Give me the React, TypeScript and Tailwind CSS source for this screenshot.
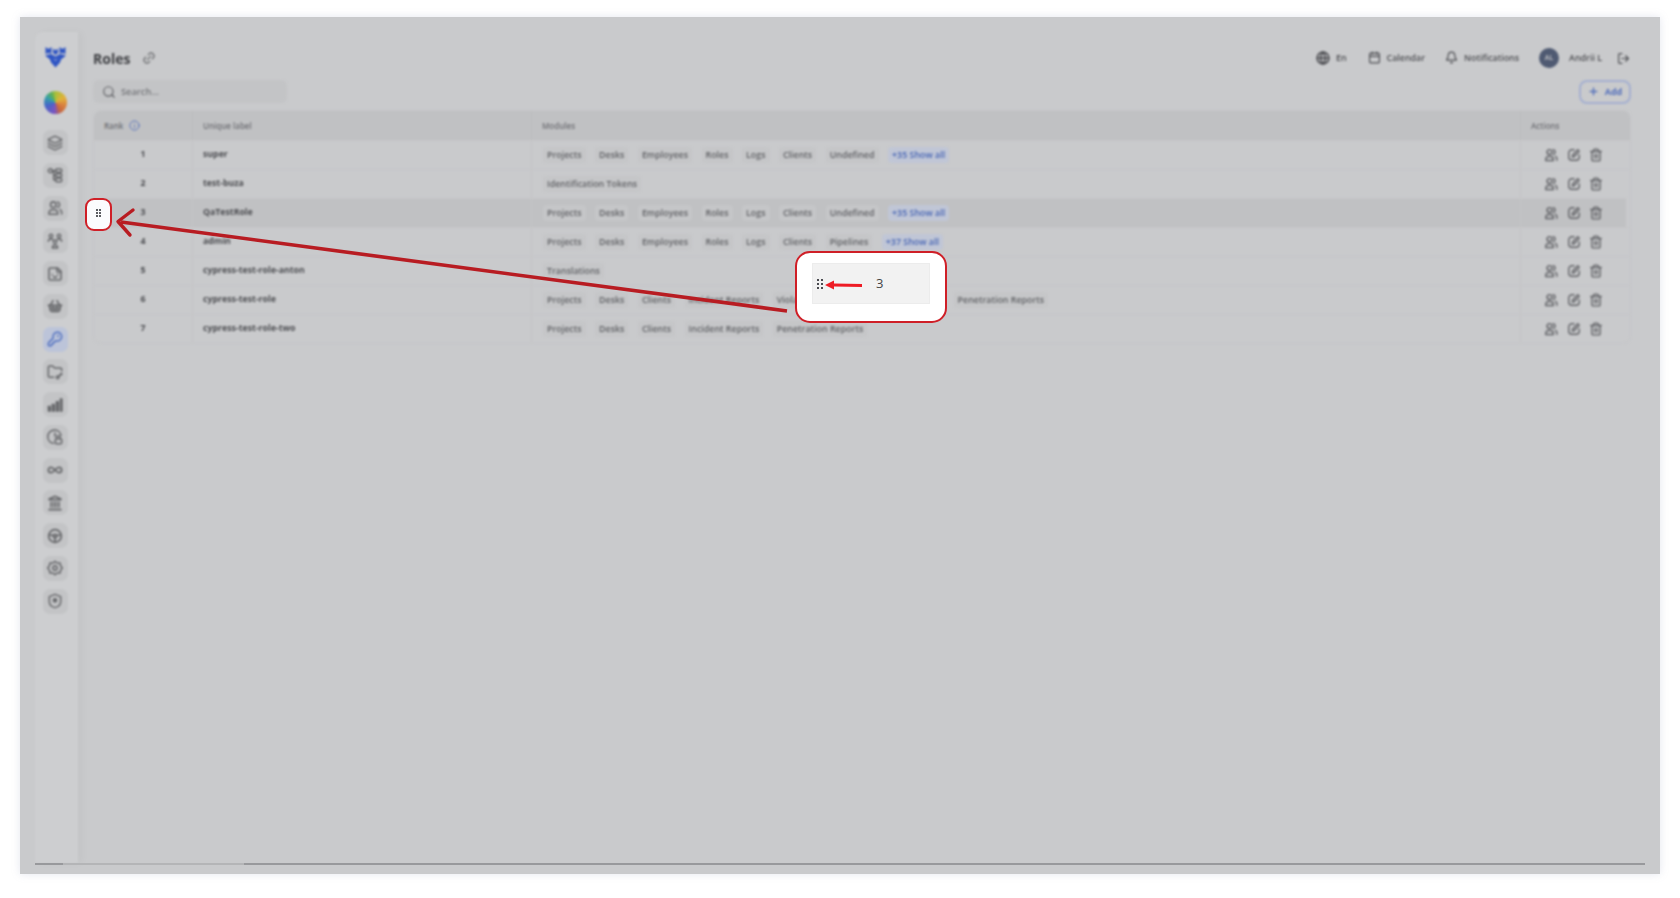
import React from "react";
import {
  Layers, Sticker, ShoppingBasket, KeyRound, FolderKey,
  Infinity as InfinityIcon, Landmark, Link2, Search, Info, Globe, Calendar, Bell,
  LogOut, Plus, Trash2,
} from "lucide-react";

const font = "font-['Open_Sans',sans-serif]";

function Svg({ children, size = 16, sw = 2.2 }: { children: React.ReactNode; size?: number; sw?: number }) {
  return (
    <svg width={size} height={size} viewBox="0 0 24 24" fill="none" stroke="currentColor" strokeWidth={sw} strokeLinecap="round" strokeLinejoin="round">
      {children}
    </svg>
  );
}

function Wheel() {
  return (
    <Svg sw={2.6}>
      <circle cx="12" cy="12" r="9.5" />
      <circle cx="12" cy="12" r="2.5" />
      <path d="M3 10.5 9.6 11M21 10.5 14.4 11M12 14.5V21" />
    </Svg>
  );
}

function ShieldDot() {
  return (
    <Svg sw={2.2}>
      <path d="M12 2 20.5 5.5V13c0 4.5-3.6 7.6-8.5 9-4.9-1.4-8.5-4.5-8.5-9V5.5Z" />
      <circle cx="12" cy="11" r="2.4" fill="currentColor" />
    </Svg>
  );
}

function ClockLock() {
  return (
    <Svg sw={2.3}>
      <path d="M21 9.5A10 10 0 1 0 9.5 21.5" />
      <path d="M12 6v5" />
      <rect x="12.5" y="14.5" width="9.5" height="7.5" rx="1.5" />
      <path d="M14.5 14.5v-2a2.5 2.5 0 0 1 5 0v2" />
    </Svg>
  );
}

function UserPair({ size = 16, sw = 2.3 }: { size?: number; sw?: number }) {
  return (
    <Svg size={size} sw={sw}>
      <circle cx="9.5" cy="7" r="4.2" />
      <path d="M3 21.5v-2a5 5 0 0 1 5-5h3a5 5 0 0 1 5 5v2Z" />
      <path d="M16 3a4.2 4.2 0 0 1 0 8M19.5 14.5a4.5 4.5 0 0 1 2.5 4V21" />
    </Svg>
  );
}

function Group() {
  return (
    <Svg sw={2.2}>
      <circle cx="6" cy="4.5" r="2.6" />
      <circle cx="18" cy="4.5" r="2.6" />
      <circle cx="12" cy="13" r="2.6" />
      <path d="M2 12.5c0-2 1.8-3.5 4-3.5 1 0 1.9.3 2.6.8M22 12.5c0-2-1.8-3.5-4-3.5-1 0-1.9.3-2.6.8M8 22.5c0-2.5 1.8-4 4-4s4 1.5 4 4Z" />
    </Svg>
  );
}

function Tree() {
  return (
    <Svg sw={2.3}>
      <circle cx="5" cy="5.5" r="3" />
      <path d="M8 5.5h5M10 5.5V19h3M10 12.5h3" />
      <rect x="13" y="3" width="9" height="5" rx="1.5" />
      <rect x="13" y="10" width="9" height="5" rx="1.5" />
      <rect x="13" y="17" width="9" height="5" rx="1.5" />
    </Svg>
  );
}

function Bars() {
  return (
    <svg width="16" height="16" viewBox="0 0 24 24" fill="currentColor">
      <rect x="1" y="13" width="5" height="9" rx="1" />
      <rect x="7" y="10" width="5" height="12" rx="1" />
      <rect x="13" y="6" width="5" height="16" rx="1" />
      <rect x="19" y="2" width="4.5" height="20" rx="1" />
    </svg>
  );
}

function Hex() {
  return (
    <Svg sw={2.3}>
      <path d="M12 2 15 4.5 19.5 4.5 20.5 9 23 12 20.5 15 19.5 19.5 15 19.5 12 22 9 19.5 4.5 19.5 3.5 15 1 12 3.5 9 4.5 4.5 9 4.5Z" />
      <circle cx="12" cy="12" r="3.2" />
    </Svg>
  );
}

function EditRound() {
  return (
    <Svg size={14} sw={2.4}>
      <path d="M12 3H8.5A5.5 5.5 0 0 0 3 8.5v7A5.5 5.5 0 0 0 8.5 21h7a5.5 5.5 0 0 0 5.5-5.5V12" />
      <path d="M9 15.5l1-4L18.5 3 21 5.5 12.5 14.5Z" />
    </Svg>
  );
}

function Logo() {
  return (
    <svg width="21" height="22" viewBox="0 0 21 22">
      <path d="M0.5 1 3.5 3 6.5 1V7.5L3.5 7 0.5 8Z M20.5 1 17.5 3 14.5 1V7.5L17.5 7 20.5 8Z M8 2.5 10.5 4.5 13 2.5V7L10.5 9 8 7Z" fill="#2f55c4" />
      <path d="M0 9.5 6 8 10.5 10.5 15 8 21 9.5 16 13.5 15 16.5 10.5 21.5 6 16.5 5 13.5Z" fill="#2f55c4" />
      <path d="M8 12 10.5 13.5 13 12 10.5 15.5Z" fill="#7f93d0" />
    </svg>
  );
}

const navIcons: React.ReactNode[] = [
  <Layers size={16} strokeWidth={2.2} />,
  <Tree />,
  <UserPair />,
  <Group />,
  <Sticker size={16} strokeWidth={2.4} />,
  <ShoppingBasket size={16} strokeWidth={2.4} />,
  <KeyRound size={16} strokeWidth={2.2} />,
  <FolderKey size={16} strokeWidth={2.3} />,
  <Bars />,
  <ClockLock />,
  <InfinityIcon size={16} strokeWidth={2.6} />,
  <Landmark size={16} strokeWidth={2.4} />,
  <Wheel />,
  <Hex />,
  <ShieldDot />,
];

type Row = { rank: number; label: string; mods: string[]; more?: string; hover?: boolean };

const rows: Row[] = [
  { rank: 1, label: "super", mods: ["Projects", "Desks", "Employees", "Roles", "Logs", "Clients", "Undefined"], more: "+35 Show all" },
  { rank: 2, label: "test-buza", mods: ["Identification Tokens"] },
  { rank: 3, label: "QaTestRole", mods: ["Projects", "Desks", "Employees", "Roles", "Logs", "Clients", "Undefined"], more: "+35 Show all", hover: true },
  { rank: 4, label: "admin", mods: ["Projects", "Desks", "Employees", "Roles", "Logs", "Clients", "Pipelines"], more: "+37 Show all" },
  { rank: 5, label: "cypress-test-role-anton", mods: ["Translations"] },
  { rank: 6, label: "cypress-test-role", mods: ["Projects", "Desks", "Clients", "Incident Reports", "Violation Reports", "Compliance Logs", "Penetration Reports"] },
  { rank: 7, label: "cypress-test-role-two", mods: ["Projects", "Desks", "Clients", "Incident Reports", "Penetration Reports"] },
];

function Chip({ text, blue }: { text: string; blue?: boolean }) {
  return (
    <span
      className={
        "rounded-[4px] px-[4px] text-[8.9px] font-semibold leading-[16px] whitespace-nowrap " +
        (blue ? "bg-[#c0c6d6] text-[#4664b4]" : "bg-[#c5c6c8] text-[#606165]")
      }
    >
      {text}
    </span>
  );
}

function TopItem({ icon, text }: { icon: React.ReactNode; text: string }) {
  return (
    <div className="flex items-center gap-[6px] text-[#4d4e52]">
      {icon}
      <span className="text-[8.9px] font-semibold">{text}</span>
    </div>
  );
}

export default function App() {
  return (
    <div className={"relative h-[898px] w-[1680px] overflow-hidden bg-white pl-[20px] pt-[17px] " + font}>
      <div className="flex h-[857px] w-[1640px] flex-col bg-[#c9cacc] pl-[15px] pt-[15px] shadow-[0_0_8px_rgba(150,160,190,0.25)]">
        <div className="flex h-[831px] w-[1610px] blur-[0.8px]">
          <aside className="flex w-[43px] shrink-0 flex-col items-center rounded-tl-lg bg-[#cdced0] pr-[3px] pt-[14px] shadow-[4px_0_8px_rgba(0,0,0,0.03)]">
            <Logo />
            <div className="mt-[23px] h-[23px] w-[23px] rounded-full bg-[conic-gradient(#a9bf3a_0deg,#e2b23a_60deg,#d9813f_110deg,#c8683f_150deg,#7a55c0_185deg,#4566c9_250deg,#37a0a8_300deg,#5cae5a_335deg,#a9bf3a_360deg)]" />
            <div className="mt-[16px] flex flex-col gap-[7.75px]">
              {navIcons.map((icon, i) => (
                <div
                  key={i}
                  className={
                    "flex h-[25px] w-[25px] items-center justify-center rounded-[7px] " +
                    (i === 6 ? "bg-[#bcc4d9] text-[#4f6fc0]" : "bg-[#c3c4c6] text-[#66676a]")
                  }
                >
                  {icon}
                </div>
              ))}
            </div>
          </aside>

          <main className="flex min-w-0 flex-1 flex-col pl-[15px] pr-[14px] pt-[14px]">
            <header className="flex h-[24px] items-center justify-between">
              <div className="flex items-center gap-[12px]">
                <h1 className="text-[14px] font-bold text-[#3f4044]">Roles</h1>
                <Link2 size={14} strokeWidth={1.9} className="-rotate-45 text-[#66676a]" />
              </div>
              <div className="flex items-center">
                <TopItem icon={<Globe size={14} strokeWidth={2.8} />} text="En" />
                <div className="ml-[21px]">
                  <TopItem icon={<Calendar size={13} strokeWidth={2.2} />} text="Calendar" />
                </div>
                <div className="ml-[20px]">
                  <TopItem icon={<Bell size={13} strokeWidth={2.2} />} text="Notifications" />
                </div>
                <div className="ml-[20px] flex h-[20px] w-[20px] items-center justify-center rounded-full bg-[#4f5a72] text-[7px] font-semibold text-[#c9cacc]">
                  AL
                </div>
                <span className="ml-[10px] text-[8.9px] font-semibold text-[#4d4e52]">Andrii L</span>
                <LogOut size={13} strokeWidth={2.2} className="ml-[15px] mr-[1px] text-[#505155]" />
              </div>
            </header>

            <div className="mt-[10px] flex h-[23px] items-center justify-between">
              <div className="flex h-[23px] w-[194px] items-center gap-[5px] rounded-[6px] bg-[#c3c4c6] pl-[9px] text-[#616266]">
                <Search size={14} strokeWidth={2} />
                <span className="text-[9.3px] font-semibold text-[#737478]">Search...</span>
              </div>
              <div className="flex h-[24px] w-[52px] items-center justify-center gap-[6px] rounded-[8px] border-2 border-[#a4afd0] text-[#5470bb]">
                <Plus size={11} strokeWidth={3} />
                <span className="text-[9px] font-bold">Add</span>
              </div>
            </div>

            <div className="mt-[7px] overflow-hidden rounded-lg border border-[#c5c6c8]">
              <div className="grid h-[29px] grid-cols-[99px_339px_989px_109px] items-center bg-[#c0c1c3] text-[8px] font-semibold text-[#6e6f74]">
                <div className="flex h-full items-center gap-[6px] border-r border-[#bbbcbe] pl-[10px]">
                  Rank <Info size={11} strokeWidth={2} className="text-[#5470bb]" />
                </div>
                <div className="flex h-full items-center border-r border-[#bbbcbe] pl-[10px]">Unique label</div>
                <div className="flex h-full items-center border-r border-[#bbbcbe] pl-[10px]">Modules</div>
                <div className="flex h-full items-center pl-[10px]">Actions</div>
              </div>
              {rows.map((r) => (
                <div
                  key={r.rank}
                  className={
                    "grid h-[29px] grid-cols-[99px_339px_989px_109px] items-center border-t border-[#c5c6c8] " +
                    (r.hover ? "mr-[4px] bg-[#c0c1c3]" : "")
                  }
                >
                  <div className="flex h-full items-center justify-center border-r border-[#c3c4c6] text-[8.75px] font-bold text-[#4b4c50]">
                    {r.rank}
                  </div>
                  <div className="flex h-full items-center border-r border-[#c3c4c6] pl-[10px] text-[8.75px] font-bold text-[#4b4c50]">
                    {r.label}
                  </div>
                  <div className="flex h-full items-center gap-[9.5px] border-r border-[#c3c4c6] pl-[11px]">
                    {r.mods.map((m) => (
                      <Chip key={m} text={m} />
                    ))}
                    {r.more && <Chip text={r.more} blue />}
                  </div>
                  <div className="flex h-full items-center gap-[8.5px] pl-[23px] text-[#626367]">
                    <UserPair size={14} sw={2.5} />
                    <EditRound />
                    <Trash2 size={14} strokeWidth={2.4} />
                  </div>
                </div>
              ))}
            </div>
          </main>
        </div>
        <div className="flex h-[2px] w-[1610px] blur-[0.4px]">
          <div className="w-[28px] bg-[#98999c]" />
          <div className="w-[181px] bg-[#b4b5b7]" />
          <div className="flex-1 bg-[#98999c]" />
        </div>
      </div>

      {/* Annotations drawn over the dimmed page */}
      <svg className="absolute left-0 top-0" width="1680" height="898" fill="none">
        <path d="M787 311 121 222" stroke="#b81c22" strokeWidth="3.6" />
        <path d="M133 210 118 221.5 130 235" stroke="#b81c22" strokeWidth="3.4" strokeLinecap="round" strokeLinejoin="round" />
      </svg>

      <div className="absolute left-[85px] top-[198px] flex h-[33px] w-[27px] items-center justify-center rounded-[9px] border-2 border-[#cf1f27] bg-[#fbfbfd] pb-[3px]">
        <div className="grid grid-cols-2 gap-[1.5px]">
          {[0, 1, 2, 3, 4, 5].map((i) => (
            <span key={i} className="h-[1.5px] w-[1.5px] bg-[#5a5b60]" />
          ))}
        </div>
      </div>

      <div className="absolute left-[795px] top-[251px] flex h-[72px] w-[152px] items-start rounded-[15px] border-2 border-[#cf1f27] bg-white pl-[15px] pt-[10px]">
        <div className="flex h-[41px] w-[118px] items-center border border-[#ececec] bg-[#f2f2f2] pl-[4px] pt-[1px]">
          <div className="grid grid-cols-2 gap-[2px]">
            {[0, 1, 2, 3, 4, 5].map((i) => (
              <span key={i} className="h-[2px] w-[2px] bg-[#4a4b50]" />
            ))}
          </div>
          <svg className="ml-[2px] mt-[2px]" width="38" height="10" viewBox="0 0 38 10">
            <path d="M0 5 9 0.5V3.5L37 4V7L9 6.5V9.5Z" fill="#ee1c25" />
          </svg>
          <span className="ml-[13px] text-[13px] text-[#444]">3</span>
        </div>
      </div>
    </div>
  );
}
